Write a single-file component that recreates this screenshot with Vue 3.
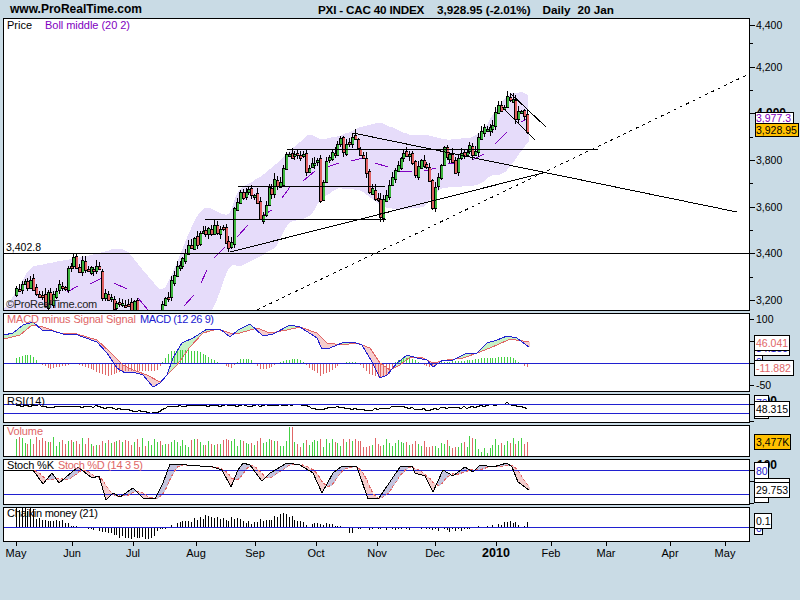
<template>
  <div class="page">
    <header class="top">
      <span class="site">www.ProRealTime.com</span>
      <span class="name">PXI - CAC 40 INDEX</span>
      <span class="quote">3,928.95 (-2.01%)</span>
      <span class="period">Daily</span>
      <span class="date">20 Jan</span>
    </header>

    <!-- price -->
    <div class="row">
      <div class="panel main-panel">
        <svg class="chart" viewBox="4 19 745 291">
          <polygon :points="bandPoints" class="band" />
          <path v-for="(d, i) in midSegments" :key="'m' + i" :d="d" class="mid" />
          <g v-for="c in candles" :key="c.x">
            <line :x1="c.x + 0.5" :x2="c.x + 0.5" :y1="c.high" :y2="c.low" class="wick" />
            <rect :x="c.x - 1" :y="c.top" width="3" :height="c.h + 2" class="edge" />
            <rect :x="c.x" :y="c.top + 1" width="2" :height="c.h" :class="c.up ? 'up' : 'down'" />
          </g>
          <line v-for="(l, i) in trendLines" :key="'t' + i" :x1="l[0]" :y1="l[1]" :x2="l[2]" :y2="l[3]" :class="l[4] || 'trend'" />
          <text x="7" y="29" class="lbl black">Price</text>
          <text x="45" y="29" class="lbl purple" textLength="85">Boll middle (20 2)</text>
          <text x="6" y="251" class="num">3,402.8</text>
          <text x="6" y="308" class="mark">©ProRealTime.com</text>
        </svg>
      </div>
      <svg class="axis main-panel" viewBox="750 18 50 293">
        <line v-for="y in mainMinor" :key="y" x1="750" x2="753" :y1="y + 0.5" :y2="y + 0.5" class="tick" />
        <g v-for="t in mainTicks" :key="t.label">
          <line x1="750" x2="755" :y1="t.y + 0.5" :y2="t.y + 0.5" class="tick" />
          <text x="756" :y="t.y + 4" :class="['num', t.bold ? 'bold' : '']">{{ t.label }}</text>
        </g>
        <rect x="755.5" y="112.5" width="38" height="11" class="flag" />
        <text x="756" y="122" class="num purple">3,977.3</text>
        <rect x="755.5" y="123.5" width="43" height="13" class="flag gold" />
        <text x="756" y="134" class="num">3,928.95</text>
      </svg>
    </div>

    <!-- macd -->
    <div class="row">
      <div class="panel macd-panel">
        <svg class="chart" viewBox="4 314 745 77">
          <line v-for="f in macdFill" :key="f.x" :x1="f.x + 0.5" :x2="f.x + 0.5" :y1="f.y1" :y2="f.y2" :class="f.cls" />
          <line v-for="b in macdBars" :key="b.x" :x1="b.x + 0.5" :x2="b.x + 0.5" y1="363.5" :y2="b.y" :class="b.up ? 'bar-up' : 'bar-down'" />
          <line x1="4" x2="749" y1="363.5" y2="363.5" class="blue-line" />
          <polyline :points="signalLine" class="line red-line" />
          <polyline :points="macdLine" class="line blue-stroke" />
          <text x="7" y="323" class="lbl red" textLength="129">MACD minus Signal Signal</text>
          <text x="140" y="323" class="lbl blue" textLength="74">MACD (12 26 9)</text>
        </svg>
      </div>
      <svg class="axis macd-panel" viewBox="750 313 50 79">
        <line x1="750" x2="754" y1="319.5" y2="319.5" class="tick" />
        <line x1="750" x2="754" y1="341.5" y2="341.5" class="tick" />
        <line x1="750" x2="754" y1="363.5" y2="363.5" class="tick" />
        <line x1="750" x2="754" y1="385.5" y2="385.5" class="tick" />
        <text x="756" y="323" class="num">100</text>
        <text x="756" y="389" class="num">-50</text>
        <rect x="754.5" y="342.5" width="35" height="13" class="flag" />
        <text x="756" y="352" class="num blue">34.159</text>
        <rect x="754.5" y="355.5" width="8" height="6" class="flag" />
        <text x="756" y="366" class="num blue">0</text>
        <rect x="754.5" y="335.5" width="35" height="15" class="flag" />
        <text x="756" y="347" class="num red">46.041</text>
        <rect x="754.5" y="360.5" width="39" height="15" class="flag" />
        <text x="756" y="372" class="num red">-11.882</text>
      </svg>
    </div>

    <!-- rsi -->
    <div class="row">
      <div class="panel rsi-panel">
        <svg class="chart" viewBox="4 395 745 27">
          <polyline :points="rsiLine" class="line black-line" />
          <line x1="4" x2="749" y1="404.5" y2="404.5" class="blue-line" />
          <line x1="4" x2="749" y1="413.5" y2="413.5" class="blue-line" />
          <text x="7" y="405" class="lbl black" textLength="38">RSI(14)</text>
        </svg>
      </div>
      <svg class="axis rsi-panel" viewBox="750 394 50 29">
        <line x1="750" x2="754" y1="421.5" y2="421.5" class="tick" />
        <line x1="750" x2="754" y1="404.5" y2="404.5" class="tick" />
        <text x="757" y="405" class="num bold">100</text>
        <rect x="754.5" y="395.5" width="14" height="23" class="flag" />
        <text x="756" y="407" class="num blue">70</text>
        <rect x="754.5" y="401.5" width="35" height="15" class="flag" />
        <text x="756" y="413" class="num">48.315</text>
      </svg>
    </div>

    <!-- volume -->
    <div class="row">
      <div class="panel vol-panel">
        <svg class="chart" viewBox="4 426 745 30">
          <line v-for="b in volBars" :key="b.x" :x1="b.x + 0.5" :x2="b.x + 0.5" y1="456" :y2="b.y" :class="b.up ? 'bar-up' : 'bar-down'" />
          <text x="7" y="435" class="lbl red" textLength="36">Volume</text>
        </svg>
      </div>
      <svg class="axis vol-panel" viewBox="750 425 50 32">
        <rect x="754.5" y="434.5" width="36" height="15" class="flag gold" />
        <text x="756" y="446" class="num">3,477K</text>
      </svg>
    </div>

    <!-- stochastic -->
    <div class="row">
      <div class="panel stoch-panel">
        <svg class="chart" viewBox="4 460 745 44">
          <line v-for="f in stochFill" :key="f.x" :x1="f.x + 0.5" :x2="f.x + 0.5" :y1="f.y1" :y2="f.y2" :class="f.cls" />
          <line x1="4" x2="749" y1="470.5" y2="470.5" class="blue-line" />
          <line x1="4" x2="749" y1="494.5" y2="494.5" class="blue-line" />
          <polyline :points="stochD" class="line red-dash" />
          <polyline :points="stochK" class="line black-line" />
          <text x="7" y="469" class="lbl black" textLength="47">Stoch %K</text>
          <text x="58" y="469" class="lbl red" textLength="85">Stoch %D (14 3 5)</text>
        </svg>
      </div>
      <svg class="axis stoch-panel" viewBox="750 459 50 46">
        <line x1="750" x2="754" y1="470.5" y2="470.5" class="tick" />
        <line x1="750" x2="754" y1="481.5" y2="481.5" class="tick" />
        <line x1="750" x2="754" y1="503.5" y2="503.5" class="tick" />
        <text x="757" y="469" class="num bold">100</text>
        <rect x="754.5" y="462.5" width="14" height="16" class="flag" />
        <text x="756" y="475" class="num blue">80</text>
        <rect x="754.5" y="478.5" width="35" height="4" class="flag" />
        <rect x="754.5" y="497.5" width="14" height="5" class="flag" />
        <rect x="754.5" y="482.5" width="35" height="15" class="flag" />
        <text x="756" y="494" class="num">29.753</text>
      </svg>
    </div>

    <!-- chaikin -->
    <div class="row">
      <div class="panel chaikin-panel">
        <svg class="chart" viewBox="4 508 745 33">
          <line v-for="b in chaikinBars" :key="b.x" :x1="b.x + 0.5" :x2="b.x + 0.5" y1="527.5" :y2="b.y" class="black-bar" />
          <line x1="4" x2="749" y1="527.5" y2="527.5" class="blue-line" />
          <text x="7" y="517" class="lbl black" textLength="91">Chaikin money (21)</text>
        </svg>
      </div>
      <svg class="axis chaikin-panel" viewBox="750 507 50 35">
        <line x1="750" x2="754" y1="527.5" y2="527.5" class="tick" />
        <rect x="754.5" y="522.5" width="8" height="12" class="flag" />
        <text x="756" y="532" class="num blue">0</text>
        <rect x="754.5" y="513.5" width="17" height="15" class="flag" />
        <text x="756" y="525" class="num">0.1</text>
      </svg>
    </div>

    <!-- time axis -->
    <svg class="time" viewBox="0 542 800 58">
      <g v-for="m in months" :key="m.x">
        <line :x1="m.x + 0.5" :x2="m.x + 0.5" y1="542" y2="546" class="tick" />
        <text :x="m.x" y="557" :class="['num', 'month', m.bold ? 'year' : '']">{{ m.label }}</text>
      </g>
    </svg>
  </div>
</template>

<script setup>
const interp = (pts, x) => {
  if (x <= pts[0][0]) return pts[0][1];
  for (let i = 1; i < pts.length; i++) {
    if (x <= pts[i][0]) {
      const [x0, y0] = pts[i - 1];
      const [x1, y1] = pts[i];
      return y0 + ((y1 - y0) * (x - x0)) / (x1 - x0);
    }
  }
  return pts[pts.length - 1][1];
};

// fixed seed so the chart is the same on every load
let seed = 40;
const rnd = () => {
  seed = (seed * 16807) % 2147483647;
  return seed / 2147483647;
};

const closes = [
  [17, 295], [25, 285], [30, 277], [38, 295], [45, 300], [52, 295], [60, 288], [65, 283], [72, 262], [80, 265],
  [90, 272], [100, 270], [102, 295], [110, 305], [115, 300], [125, 312], [135, 305], [145, 330], [155, 325], [163, 308],
  [170, 290], [178, 262], [183, 253], [190, 247], [197, 238], [205, 232], [213, 232], [220, 225], [225, 240], [230, 245],
  [236, 195], [240, 197], [248, 190], [255, 192], [258, 215], [263, 210], [267, 197], [273, 185], [280, 177], [285, 158],
  [290, 150], [295, 154], [303, 155], [307, 175], [313, 155], [318, 170], [320, 195], [325, 165], [335, 155], [340, 143],
  [345, 145], [352, 135], [358, 150], [362, 145], [365, 170], [370, 190], [375, 195], [380, 210], [385, 195], [390, 180],
  [395, 165], [403, 150], [410, 148], [414, 175], [420, 165], [425, 160], [428, 175], [432, 205], [436, 180], [440, 165],
  [445, 150], [450, 155], [453, 170], [458, 165], [462, 150], [468, 145], [472, 160], [475, 145], [478, 135], [480, 135],
  [484, 125], [490, 125], [495, 110], [503, 108], [507, 100], [510, 93], [514, 110], [517, 115], [520, 107], [524, 118],
  [527, 112], [529, 130]
];

const grid = [];
for (let i = 0; i * 2.87 + 16 <= 529; i++) grid.push(Math.round(i * 2.87 + 16));

let prev = interp(closes, 16);
const candles = grid.map((x) => {
  const close = interp(closes, x) + (rnd() - 0.5) * 14;
  const open = prev + (rnd() - 0.5) * 4;
  prev = close;
  const top = Math.round(Math.min(open, close));
  const h = Math.max(1, Math.round(Math.abs(open - close)));
  return {
    x,
    top,
    h,
    up: close < open,
    high: top - 1 - Math.round(rnd() * 5),
    low: top + h + 1 + Math.round(rnd() * 5)
  };
});
// last bar is the big red one
const lastBar = candles[candles.length - 1];
Object.assign(lastBar, { top: 114, h: 17, up: false, high: 110, low: 134 });

const upper = [
  [4, 310], [17, 290], [30, 267], [55, 262], [77, 258], [100, 253], [117, 248], [127, 250], [140, 267], [157, 287],
  [163, 293], [177, 263], [190, 230], [200, 210], [207, 207], [230, 217], [237, 190], [260, 177], [277, 163], [290, 150],
  [310, 133], [320, 140], [343, 135], [357, 128], [380, 122], [400, 131], [410, 135], [427, 135], [447, 140], [475, 137],
  [487, 125], [497, 107], [510, 93], [527, 92], [529, 98]
];
const lower = [
  [213, 311], [217, 300], [230, 263], [240, 267], [277, 247], [287, 223], [310, 217], [320, 200], [337, 188], [360, 190],
  [383, 207], [400, 210], [413, 208], [425, 207], [433, 195], [442, 188], [480, 185], [490, 175], [503, 175], [517, 157],
  [529, 140]
];
// take the corners off the band edges
const smooth = (pts, x) => {
  let sum = 0;
  for (let k = -2; k <= 2; k++) sum += interp(pts, x + k * 2);
  return Math.round(sum / 5);
};
const bandTop = [];
for (let x = 4; x <= 529; x += 2) bandTop.push(`${x},${smooth(upper, x)}`);
const bandBottom = [];
for (let x = 529; x >= 4; x -= 2) bandBottom.push(`${x},${x < 213 ? 311 : smooth(lower, x)}`);
const bandPoints = [...bandTop, ...bandBottom].join(' ');

const midSegments = [
  [67, 292, 78, 286], [90, 284, 102, 278], [114, 283, 127, 289], [138, 298, 148, 310], [184, 306, 194, 295],
  [201, 283, 207, 270], [214, 258, 225, 247], [237, 237, 248, 225], [260, 217, 272, 210], [282, 198, 290, 187],
  [303, 181, 315, 171], [327, 167, 339, 163], [351, 161, 363, 158], [375, 163, 388, 167], [400, 171, 412, 172],
  [424, 171, 436, 168], [448, 163, 460, 164], [472, 160, 484, 154], [495, 144, 507, 132], [521, 122, 529, 118]
].map(([a, b, c, d]) => `M${a} ${b}L${c} ${d}`);

const trendLines = [
  [4, 253.5, 749, 253.5],
  [287, 149.5, 598, 149.5],
  [238, 186.5, 385, 186.5],
  [205, 219.5, 386, 219.5],
  [230, 252, 543, 173],
  [353, 133, 737, 212],
  [510, 93, 546, 127],
  [502, 107, 535, 140],
  [257, 310, 749, 74, 'dotted']
];

const mainTicks = [
  { y: 25, label: '4,400' },
  { y: 67, label: '4,200' },
  { y: 113, label: '4,000', bold: true },
  { y: 160, label: '3,800' },
  { y: 207, label: '3,600' },
  { y: 253, label: '3,400' },
  { y: 300, label: '3,200' }
];
const mainMinor = [43, 90, 137, 183, 230, 277];

const months = [
  { x: 16, label: 'May' }, { x: 72, label: 'Jun' }, { x: 133, label: 'Jul' }, { x: 196, label: 'Aug' },
  { x: 255, label: 'Sep' }, { x: 316, label: 'Oct' }, { x: 377, label: 'Nov' }, { x: 435, label: 'Dec' },
  { x: 496, label: '2010', bold: true }, { x: 551, label: 'Feb' }, { x: 606, label: 'Mar' }, { x: 670, label: 'Apr' },
  { x: 725, label: 'May' }
];

const toPoints = (pts) => pts.map((p) => `${p[0]},${p[1]}`).join(' ');

// macd, pixel positions read off the chart
const macd = [
  [4, 335], [13, 333], [23, 325], [33, 322], [42, 330], [53, 331], [63, 334], [75, 334], [83, 337], [97, 342],
  [107, 353], [117, 368], [125, 373], [133, 372], [143, 375], [153, 387], [160, 383], [167, 375], [173, 358], [182, 343],
  [193, 338], [207, 329], [220, 329], [230, 337], [238, 330], [250, 324], [263, 336], [273, 334], [290, 325], [300, 327],
  [317, 338], [322, 349], [330, 348], [342, 343], [353, 342], [362, 345], [372, 362], [380, 378], [387, 375], [397, 363],
  [407, 355], [417, 358], [427, 360], [433, 367], [443, 360], [453, 360], [467, 353], [477, 353], [487, 343], [497, 340],
  [507, 336], [517, 338], [529, 347]
];
const signal = [
  [4, 339], [20, 335], [32, 325], [43, 327], [60, 333], [77, 334], [97, 340], [110, 352], [123, 365], [133, 370],
  [147, 375], [160, 382], [177, 365], [190, 347], [203, 333], [217, 329], [230, 333], [240, 333], [257, 328], [270, 333],
  [287, 330], [300, 327], [317, 333], [327, 343], [342, 345], [357, 343], [370, 348], [380, 363], [390, 370], [400, 365],
  [410, 357], [423, 358], [433, 363], [447, 360], [463, 358], [480, 352], [497, 345], [510, 339], [529, 342]
];
const macdHist = [
  [4, 3], [15, 5], [28, 9], [35, 6], [38, 0], [43, -2], [50, -5], [60, -3], [75, 0], [85, -3], [100, -10], [108, -12],
  [118, -9], [130, -7], [150, -8], [158, -6], [162, 2], [170, 12], [178, 14], [200, 12], [212, 4], [222, 0], [230, -5],
  [240, 5], [250, 5], [260, -5], [268, -5], [280, 2], [295, 5], [300, 4], [310, -5], [320, -12], [330, -8], [340, 0],
  [350, 2], [355, 2], [362, -3], [368, -10], [380, -14], [390, -10], [395, 2], [405, 6], [412, 5], [420, 0], [430, -4],
  [440, 2], [450, 2], [465, 3], [480, 5], [497, 6], [510, 7], [518, 2], [522, -1], [529, -5]
];
const macdLine = toPoints(macd);
const signalLine = toPoints(signal);

const fillBetween = (a, b, from, to, above, below) => {
  const out = [];
  for (let x = from; x <= to; x++) {
    const ya = interp(a, x);
    const yb = interp(b, x);
    out.push({ x, y1: Math.min(ya, yb), y2: Math.max(ya, yb), cls: ya < yb ? above : below });
  }
  return out;
};
const macdFill = fillBetween(macd, signal, 4, 529, 'fill-green', 'fill-red');

const macdBars = grid.map((x) => {
  const v = interp(macdHist, x);
  return { x, y: 363.5 - v, up: v > 0 };
});

const rsi = [
  [4, 406], [40, 405], [50, 407], [70, 406], [100, 406], [115, 409], [130, 410], [150, 412], [157, 412], [170, 406],
  [190, 405], [260, 405], [280, 405], [300, 404], [306, 405], [318, 410], [333, 406], [367, 410], [400, 406], [430, 410],
  [443, 407], [470, 407], [487, 405], [507, 403], [517, 405], [529, 409]
];
const rsiLine = toPoints(grid.map((x) => [x, Math.round(interp(rsi, x) + (rnd() - 0.5) * 1.6) + 0.5]));

const volBars = candles.map((c, i) => {
  let h = 9 + rnd() * 9;
  if (c.x > 476 && c.x < 494) h = 3 + rnd() * 8;
  if (c.x > 400 && c.x < 470) h = 8 + rnd() * 8;
  if (c.x > 288 && c.x < 294) h = 29;
  if (c.x > 468 && c.x < 472) h = 20;
  if (i % 2 && c.x < 60) h += 3;
  return { x: c.x, y: 456 - h, up: c.up };
});

const stoch = [
  [4, 470], [33, 470], [43, 484], [52, 473], [59, 483], [78, 467], [92, 478], [99, 476], [106, 500], [113, 493],
  [120, 497], [133, 488], [143, 498], [155, 499], [163, 483], [170, 464], [187, 465], [213, 467], [222, 470], [231, 487],
  [238, 470], [243, 463], [250, 465], [262, 481], [270, 473], [287, 463], [300, 465], [313, 473], [322, 493], [333, 473],
  [342, 466], [357, 467], [368, 499], [379, 498], [400, 467], [412, 466], [415, 473], [425, 476], [433, 492], [443, 470],
  [453, 476], [465, 467], [473, 472], [480, 465], [493, 467], [507, 463], [512, 467], [518, 482], [529, 490]
];
// %D is a lagged average of %K
const stochSmooth = [];
for (let x = 4; x <= 529; x += 3) {
  let sum = 0;
  for (let k = 0; k < 5; k++) sum += interp(stoch, x - k * 2.87);
  stochSmooth.push([x, Math.round(sum / 5) + 0.5]);
}
const stochK = toPoints(stoch);
const stochD = toPoints(stochSmooth);
const stochFill = fillBetween(stoch, stochSmooth, 4, 529, 'fill-slate', 'fill-red');

const chaikin = [
  [4, 18], [33, 18], [37, 8], [60, 7], [70, 3], [85, 0], [95, -2], [105, -6], [130, -11], [150, -10], [160, -2],
  [170, 1], [180, 5], [195, 8], [210, 13], [225, 8], [240, 10], [250, 4], [270, 9], [285, 14], [297, 8], [300, 5],
  [310, 2], [315, 5], [325, 3], [340, 1], [345, -2], [350, -4], [360, -1], [380, -1], [400, -1], [420, -1], [440, -2],
  [462, -4], [480, 1], [500, 2], [505, 6], [515, 6], [520, 0], [529, 6]
];
const chaikinBars = grid.map((x) => {
  const v = interp(chaikin, x);
  return { x, y: 527.5 - (v + (rnd() - 0.5) * Math.min(4, Math.abs(v) + 2)) };
});
</script>

<style scoped>
.page {
  width: 800px;
  height: 600px;
  background: #c9dbe5;
  overflow: hidden;
  font-family: "Liberation Sans", Arial, sans-serif;
}

.top {
  height: 18px;
  display: flex;
  align-items: center;
  box-sizing: border-box;
  padding-left: 10px;
  font-size: 11.7px;
  font-weight: bold;
  white-space: nowrap;
  color: #000;
}

.site {
  width: 308px;
  font-size: 12px;
}

.name {
  width: 106px;
  letter-spacing: -0.2px;
}

.quote {
  margin-left: 13px;
}

.period {
  margin-left: 12px;
}

.date {
  margin-left: 7px;
}

.row {
  display: flex;
  margin-bottom: 2px;
}

.panel {
  width: 747px;
  margin-left: 3px;
  box-sizing: border-box;
  border: 1px solid #000;
  background: #fff;
}

.main-panel { height: 293px; }
.macd-panel { height: 79px; }
.rsi-panel { height: 29px; }
.vol-panel { height: 32px; }
.stoch-panel { height: 46px; }
.chaikin-panel { height: 35px; }

.chart {
  display: block;
  width: 745px;
  height: 100%;
  shape-rendering: crispEdges;
}

.axis {
  display: block;
  width: 50px;
  overflow: visible;
  shape-rendering: crispEdges;
}

.time {
  display: block;
  width: 800px;
  height: 58px;
  margin-top: -2px;
  shape-rendering: crispEdges;
}

.band { fill: #e6dcfa; }
.mid { stroke: #8000c0; fill: none; }
.wick { stroke: #000; }
.edge { fill: #000; }
.up { fill: #3cb43c; }
.down { fill: #e06060; }
.trend { stroke: #000; }
.dotted { stroke: #000; stroke-dasharray: 3 4; }

.lbl {
  font-size: 11px;
}

.mark {
  font-size: 11px;
  letter-spacing: -0.3px;
  fill: #222;
}

.num {
  font-size: 10.5px;
  fill: #000;
}

.month {
  font-size: 11px;
  text-anchor: middle;
}

.year {
  font-size: 12.5px;
  font-weight: bold;
}

.bold { font-weight: bold; font-size: 12px; }
.black { fill: #000; }
.num.purple, .purple { fill: #8000c0; }
.num.red, .red { fill: #e06666; }
.num.blue, .blue { fill: #2020d0; }

.tick { stroke: #000; }
.flag { fill: #fff; stroke: #000; }
.gold { fill: #ffc000; }

.line { fill: none; }
.blue-stroke { stroke: #2020d0; }
.red-line { stroke: #e06666; }
.red-dash { stroke: #e06666; stroke-dasharray: 3 2; }
.black-line { stroke: #000; }
.blue-line { stroke: #2020d0; }
.black-bar { stroke: #000; }
.bar-up { stroke: #44d044; }
.bar-down { stroke: #e06666; }
.fill-green { stroke: #c6f2c6; }
.fill-red { stroke: #f5cdcd; }
.fill-slate { stroke: #c4c4de; }
</style>

<style>
body {
  background: #c9dbe5;
}
</style>
